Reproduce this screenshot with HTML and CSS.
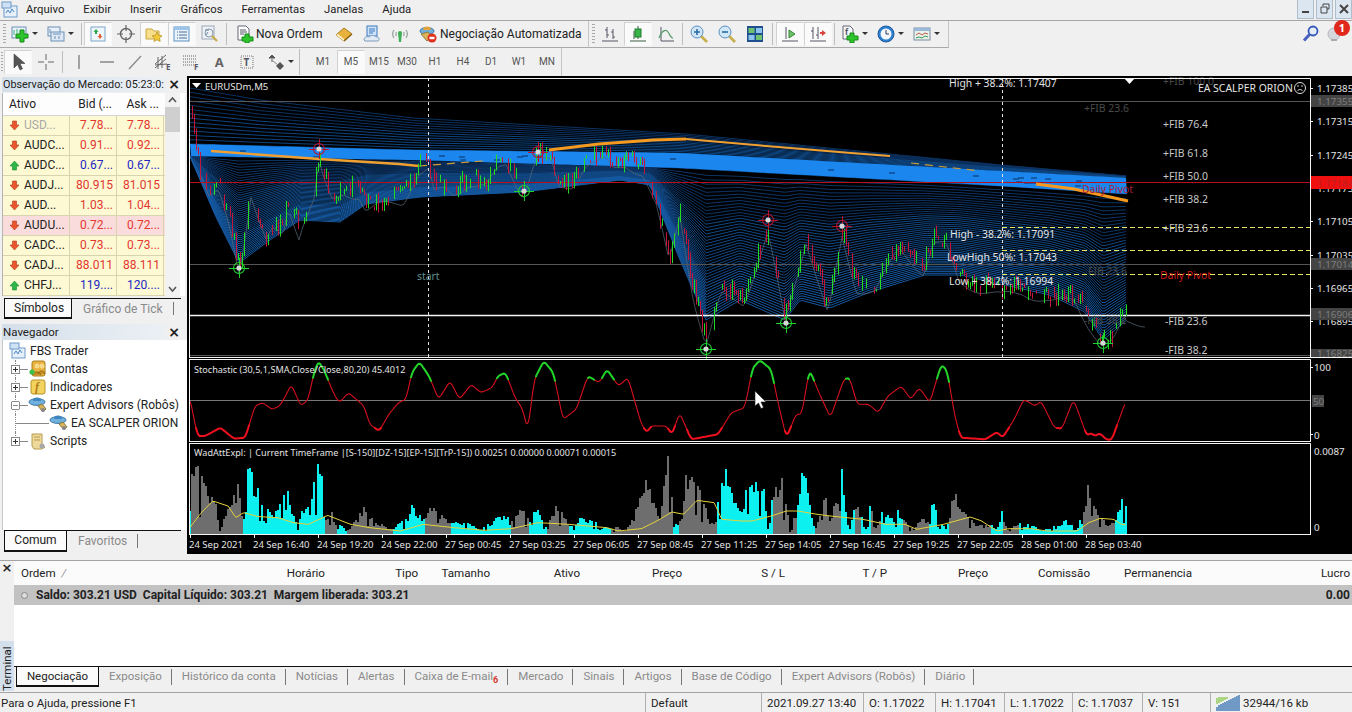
FILE: index.html
```html
<!DOCTYPE html>
<html lang="pt">
<head>
<meta charset="utf-8">
<title>MetaTrader 4</title>
<link rel="stylesheet" href="styles.css">
</head>
<body>
<svg class="defs" width="0" height="0">
  <symbol id="dn" viewBox="0 0 11 11"><path d="M3.500 1h4v4H10L5.500 10 1 5h2.500z" fill="#e8552e" stroke="#b5391a" stroke-width=".6"/></symbol>
  <symbol id="up" viewBox="0 0 11 11"><path d="M3.500 10h4V6H10L5.500 1 1 6h2.500z" fill="#2fb84a" stroke="#178a2c" stroke-width=".6"/></symbol>
  <symbol id="ea" viewBox="0 0 20 18"><ellipse cx="9" cy="6" rx="8" ry="3.400" fill="#6fb0dc" stroke="#3b78a8"/><path d="M5 5a4 3.400 0 0 1 8 0z" fill="#3f86c0"/><path d="M10 10l4-2 4 5-3 3z" fill="#d9b45a" stroke="#8c7a3e"/><circle cx="15" cy="14" r="2" fill="#888"/></symbol>
  <symbol id="pl" viewBox="0 0 9 9"><rect x=".5" y=".5" width="8" height="8" fill="#fff" stroke="#8a8a8a"/><path d="M2 4.500h5M4.500 2v5" stroke="#333"/></symbol>
</svg>
<div class="app">
  <header class="menubar">
    <svg class="appicon" viewBox="0 0 18 18"><rect x="3" y="5" width="13" height="11" fill="#e6f0fa" stroke="#6d9ac8"/><rect x="1" y="1" width="9" height="6" fill="#cfe2f5" stroke="#6d9ac8"/><path d="M5 12l2-3 2 3 2-4 2 3" fill="none" stroke="#4a86c0"/></svg>
    <nav class="menu"><span>Arquivo</span><span>Exibir</span><span>Inserir</span><span>Gráficos</span><span>Ferramentas</span><span>Janelas</span><span>Ajuda</span></nav>
    <div class="winbtns">
      <span class="winbtn"><svg viewBox="0 0 12 12"><path d="M2 9h7" stroke="#444" stroke-width="2"/></svg></span>
      <span class="winbtn"><svg viewBox="0 0 12 12"><path d="M4 3V1h6v5H8M2 4h6v6H2z" fill="none" stroke="#444"/></svg></span>
      <span class="winbtn"><svg viewBox="0 0 12 12"><path d="M2 2l8 8M10 2l-8 8" stroke="#444" stroke-width="2"/></svg></span>
    </div>
  </header>

  <div class="tbrow row1">
    <div class="tb tb-a">
      <i class="grip"></i>
      <span class="drop"><svg class="ic" viewBox="0 0 18 18"><rect x="1" y="2" width="14" height="11" fill="#e8f0fa" stroke="#6d8fb5"/><path d="M3 5v5M6 4v4" stroke="#3b7" fill="none"/><path d="M9 5h4v4h4v4h-4v4H9v-4H5V9h4z" fill="#2cc52c" stroke="#178a17"/></svg><i class="caret"></i></span>
      <span class="drop"><svg class="ic" viewBox="0 0 18 18"><rect x="1" y="2" width="12" height="9" fill="#e8f0fa" stroke="#6d8fb5"/><rect x="4" y="7" width="13" height="9" fill="#dfe9f5" stroke="#6d8fb5"/><path d="M3 4v4M6 9h8M8 11v3M12 11v3" stroke="#6d8fb5"/></svg><i class="caret"></i></span>
      <i class="sep"></i>
      <span class="btn on"><svg class="ic" viewBox="0 0 18 18"><rect x="2" y="2" width="14" height="14" fill="#eef5fb" stroke="#7fa6c8"/><path d="M7 4l2.500 3H8v2H6V7H4.500z" fill="#2fa84a"/><path d="M11 14l-2.500-3H10V9h2v2h1.500z" fill="#e0603a"/></svg></span>
      <span class="btn"><svg class="ic" viewBox="0 0 18 18"><circle cx="9" cy="9" r="5.500" fill="none" stroke="#666" stroke-width="1.400"/><path d="M9 0v6M9 12v6M0 9h6M12 9h6" stroke="#666" stroke-width="1.200"/></svg></span>
      <span class="btn on"><svg class="ic" viewBox="0 0 18 18"><path d="M1 4h6l2 2h5v8H1z" fill="#f6de8a" stroke="#c9a640"/><path d="M12 7l1.700 3.300 3.300.5-2.500 2.300.7 3.400-3.200-1.700-3 1.700.6-3.400L7 10.800l3.400-.5z" fill="#f3c93a" stroke="#b58e1c" stroke-width=".7"/></svg></span>
      <span class="btn on"><svg class="ic" viewBox="0 0 18 18"><rect x="1" y="2" width="15" height="14" fill="#eaf3fb" stroke="#5a8fc0"/><rect x="1" y="2" width="15" height="3" fill="#9cc4e8"/><path d="M4 7h1M4 10h1M4 13h1M6 7h8M6 10h8M6 13h8" stroke="#4a6f94"/></svg></span>
      <span class="btn"><svg class="ic" viewBox="0 0 18 18"><rect x="1" y="1" width="12" height="13" fill="#eef2f6" stroke="#99a8b8"/><circle cx="8" cy="8" r="4" fill="none" stroke="#8898a8"/><path d="M4 5h4M5 10l2-3" stroke="#6a8aa0"/><path d="M11 11l5 5" stroke="#c7ae4a" stroke-width="2.400"/></svg></span>
      <i class="sep"></i>
      <span class="btn btn-text w-order"><svg class="ic" viewBox="0 0 18 18"><path d="M2 1h8l3 3v11H2z" fill="#fff" stroke="#667"/><path d="M4 5h6M4 7h7M4 9h4" stroke="#556"/><path d="M9 9h4v3h4v4h-4v2H9v-2H6v-4h3z" fill="#2cc52c" stroke="#178a17"/></svg>Nova Ordem</span>
      <span class="btn"><svg class="ic" viewBox="0 0 18 18"><path d="M1 10l8-7 8 6-8 7z" fill="#e8b23c" stroke="#a97c1c"/><path d="M1 10l8 6v-2l-6-5z" fill="#fff3c8"/><path d="M9 16l8-7" stroke="#8a6416" stroke-width="1.400"/></svg></span>
      <span class="btn"><svg class="ic" viewBox="0 0 18 18"><rect x="4" y="1" width="10" height="10" fill="#cfe3f7" stroke="#3c78c0"/><path d="M6 4h6M6 6h6M6 8h4" stroke="#3c78c0"/><path d="M1 15c0-3 3-4 5-3 1-2 6-2 7 0 3-1 4 3 2 4H2z" fill="#dfeaf5" stroke="#7d9cbd"/></svg></span>
      <span class="btn"><svg class="ic" viewBox="0 0 18 18"><path d="M3 13a7 7 0 0 1 0-8M15 5a7 7 0 0 1 0 8M5.500 11a4 4 0 0 1 0-4M12.500 7a4 4 0 0 1 0 4" fill="none" stroke="#9aa8a0" stroke-width="1.300"/><path d="M7 8h4l-1 9H8z" fill="#3cae55"/><circle cx="9" cy="8" r="2" fill="#3cae55"/></svg></span>
      <span class="btn btn-text w-auto"><svg class="ic" viewBox="0 0 18 18"><ellipse cx="8" cy="6" rx="7" ry="3.500" fill="#6fb0dc" stroke="#3b78a8"/><path d="M4 5a4 3.500 0 0 1 8 0z" fill="#e2a33a"/><path d="M2 9l7-2 4 5-5 4z" fill="#d9b45a" stroke="#8c7a3e"/><circle cx="13" cy="13" r="4.500" fill="#e0301e"/><rect x="10.500" y="11.800" width="5" height="2.400" fill="#fff"/></svg>Negociação Automatizada</span>
    </div>
    <div class="tb tb-b">
      <i class="grip"></i>
      <span class="btn"><svg class="ic" viewBox="0 0 18 18"><path d="M6 2v11M4 5h2M6 10h2M12 4v10M10 7h2M12 12h2M1 16h16" stroke="#556" fill="none"/></svg></span>
      <span class="btn on"><svg class="ic" viewBox="0 0 18 18"><path d="M9 1v13M1 16h16M5 6v8" stroke="#3a5a40" fill="none"/><rect x="6" y="4" width="6" height="8" fill="#39b54a" stroke="#1d7a2c"/></svg></span>
      <span class="btn"><svg class="ic" viewBox="0 0 18 18"><path d="M4 2v14h13" fill="none" stroke="#556"/><path d="M2 13c3-8 7-9 9-6s3 6 5 6" fill="none" stroke="#5a9a6a" stroke-width="1.200"/></svg></span>
      <i class="sep"></i>
      <span class="btn"><svg class="ic" viewBox="0 0 18 18"><path d="M11 11l6 6" stroke="#c7ae4a" stroke-width="2.600"/><circle cx="7" cy="7" r="6" fill="#cfe6f7" stroke="#5c8fc0"/><path d="M4 7h6M7 4v6" stroke="#2b6ca8" stroke-width="1.600"/></svg></span>
      <span class="btn"><svg class="ic" viewBox="0 0 18 18"><path d="M11 11l6 6" stroke="#c7ae4a" stroke-width="2.600"/><circle cx="7" cy="7" r="6" fill="#cfe6f7" stroke="#5c8fc0"/><path d="M4 7h6" stroke="#2b6ca8" stroke-width="1.600"/></svg></span>
      <span class="btn"><svg class="ic" viewBox="0 0 18 18"><rect x="1" y="1" width="16" height="16" fill="#1f4f8c"/><rect x="2.500" y="3" width="6" height="5" fill="#6fc36f"/><rect x="10" y="3" width="6" height="5" fill="#8cc4ec"/><rect x="2.500" y="10" width="6" height="5" fill="#8cc4ec"/><rect x="10" y="10" width="6" height="5" fill="#6fc36f"/></svg></span>
      <i class="sep sep-w"></i>
      <span class="btn on"><svg class="ic" viewBox="0 0 18 18"><path d="M5 2v12M1 16h16" stroke="#556" fill="none"/><path d="M8 5l6 4-6 4z" fill="#6cc06c" stroke="#3a8a3a"/></svg></span>
      <span class="btn on"><svg class="ic" viewBox="0 0 18 18"><path d="M4 2v12M9 2v12M1 16h16M2 6h2M9 10h-2" stroke="#556" fill="none"/><path d="M17 8l-4-3v2h-2v2h2v2z" fill="#d8453a"/></svg></span>
      <i class="sep"></i>
      <span class="drop"><svg class="ic" viewBox="0 0 18 18"><path d="M2 1h7l3 3v10H2z" fill="#f4f6f8" stroke="#667"/><text class="ic-f" x="4" y="10">f</text><path d="M9 8h4v3h4v4h-4v3H9v-3H6v-4h3z" fill="#2cc52c" stroke="#178a17"/></svg><i class="caret"></i></span>
      <span class="drop"><svg class="ic" viewBox="0 0 18 18"><circle cx="9" cy="9" r="8" fill="#2f7fd0" stroke="#1c5a9c"/><circle cx="9" cy="9" r="5.500" fill="#f4f8fc"/><path d="M9 5v4h3" fill="none" stroke="#335"/></svg><i class="caret"></i></span>
      <span class="drop"><svg class="ic" viewBox="0 0 18 18"><rect x="1" y="3" width="16" height="12" fill="#e9f2ea" stroke="#7a8aa0"/><rect x="1" y="3" width="16" height="3" fill="#9ab8d8"/><path d="M3 10l3-2 3 2 3-2 3 1" fill="none" stroke="#c05a4a"/><path d="M3 13l3-1 3 1 3-2 3 1" fill="none" stroke="#3c9a5a"/></svg><i class="caret"></i></span>
    </div>
    <div class="tb-right">
      <svg class="ic" viewBox="0 0 18 18"><circle cx="11" cy="6" r="4.500" fill="#e4eefa" stroke="#3557b8" stroke-width="1.800"/><path d="M7.500 9.500L2 15.500" stroke="#4a5fc0" stroke-width="3"/></svg>
      <span class="bell"><svg class="ic" viewBox="0 0 18 18"><circle cx="8" cy="9" r="6" fill="#d5d8dc" stroke="#b4b8bc"/><path d="M5 15h6" stroke="#aaa" stroke-width="2"/></svg><b class="badge">1</b></span>
    </div>
  </div>

  <div class="tbrow row2">
    <div class="tb tb-c">
      <i class="grip"></i>
      <span class="btn on"><svg class="ic" viewBox="0 0 18 18"><path d="M5 1v14l3.500-3.500L11 17l2.500-1.200L11 10.500h5z" fill="#555" stroke="#333" stroke-width=".5"/></svg></span>
      <span class="btn"><svg class="ic" viewBox="0 0 18 18"><path d="M9 1v6M9 11v6M1 9h6M11 9h6" stroke="#666"/></svg></span>
      <i class="sep"></i>
      <span class="btn"><svg class="ic" viewBox="0 0 18 18"><path d="M9 2v14" stroke="#777" stroke-width="1.300"/></svg></span>
      <span class="btn"><svg class="ic" viewBox="0 0 18 18"><path d="M2 9h14" stroke="#777" stroke-width="1.300"/></svg></span>
      <span class="btn"><svg class="ic" viewBox="0 0 18 18"><path d="M3 16L15 3" stroke="#888" stroke-width="1.300"/></svg></span>
      <span class="btn"><svg class="ic" viewBox="0 0 18 18"><path d="M1 11L12 2M1 15L12 6M1 12l12-1M4 4v12M8 3v12" stroke="#666" fill="none"/><text class="ic-l" x="12" y="17">E</text></svg></span>
      <span class="btn"><svg class="ic" viewBox="0 0 18 18"><path d="M1 3h13M1 6h13M1 9h13M1 12h13" stroke="#666" stroke-dasharray="1 1"/><text class="ic-l" x="12" y="17">F</text></svg></span>
      <span class="btn btn-glyph">A</span>
      <span class="btn"><svg class="ic" viewBox="0 0 18 18"><rect x="3" y="3" width="12" height="12" fill="none" stroke="#777" stroke-dasharray="1 1"/><text class="ic-t" x="5.500" y="13">T</text></svg></span>
      <span class="drop drop-s"><svg class="ic" viewBox="0 0 18 18"><path d="M5 2l3 3H2zM5 6v3" fill="#555" stroke="#555"/><path d="M13 9l4 4-4 4-4-4z" fill="#555"/><path d="M6 8l5 4" stroke="#888"/></svg><i class="caret"></i></span>
      <i class="sep sep-t"></i>
      <span class="tf">M1</span><span class="tf on">M5</span><span class="tf">M15</span><span class="tf">M30</span><span class="tf">H1</span><span class="tf">H4</span><span class="tf">D1</span><span class="tf">W1</span><span class="tf">MN</span>
    </div>
  </div>

  <main class="work">
    <aside class="side">
      <section class="watch">
        <div class="ptitle"><span>Observação do Mercado: 05:23:0:</span><b class="x">×</b></div>
        <div class="mw">
          <div class="mw-table">
            <div class="mw-head"><span>Ativo</span><span class="r">Bid (...</span><span class="r">Ask ...</span></div>
            <div class="mw-row dim"><span><svg class="ar"><use href="#dn"/></svg>USD...</span><span class="num red">7.78...</span><span class="num red">7.78...</span></div>
            <div class="mw-row"><span><svg class="ar"><use href="#dn"/></svg>AUDC...</span><span class="num red">0.91...</span><span class="num red">0.92...</span></div>
            <div class="mw-row"><span><svg class="ar"><use href="#up"/></svg>AUDC...</span><span class="num blue">0.67...</span><span class="num blue">0.67...</span></div>
            <div class="mw-row"><span><svg class="ar"><use href="#dn"/></svg>AUDJ...</span><span class="num red">80.915</span><span class="num red">81.015</span></div>
            <div class="mw-row"><span><svg class="ar"><use href="#dn"/></svg>AUD...</span><span class="num red">1.03...</span><span class="num red">1.04...</span></div>
            <div class="mw-row sel"><span><svg class="ar"><use href="#dn"/></svg>AUDU...</span><span class="num red">0.72...</span><span class="num red">0.72...</span></div>
            <div class="mw-row"><span><svg class="ar"><use href="#dn"/></svg>CADC...</span><span class="num red">0.73...</span><span class="num red">0.73...</span></div>
            <div class="mw-row"><span><svg class="ar"><use href="#dn"/></svg>CADJ...</span><span class="num red">88.011</span><span class="num red">88.111</span></div>
            <div class="mw-row"><span><svg class="ar"><use href="#up"/></svg>CHFJ...</span><span class="num blue">119....</span><span class="num blue">120....</span></div>
          </div>
          <div class="scroll">
            <svg class="sarrow" viewBox="0 0 15 14"><path d="M4 9l3.500-4L11 9" fill="none" stroke="#555" stroke-width="1.500"/></svg>
            <div class="thumb"></div>
            <svg class="sarrow end" viewBox="0 0 15 14"><path d="M4 5l3.500 4L11 5" fill="none" stroke="#555" stroke-width="1.500"/></svg>
          </div>
        </div>
        <div class="tabs side-tabs"><span class="tab on">Símbolos</span><span class="tab">Gráfico de Tick</span></div>
      </section>
      <section class="navigator">
        <div class="ptitle"><span>Navegador</span><b class="x">×</b></div>
        <div class="tree">
          <div class="node root"><svg class="ti" viewBox="0 0 18 18"><rect x="3" y="6" width="13" height="10" fill="#e6f0fa" stroke="#6d9ac8"/><rect x="1" y="1" width="9" height="6" fill="#cfe2f5" stroke="#6d9ac8"/><path d="M5 12l2-3 2 3 2-4 2 3" fill="none" stroke="#4a86c0"/></svg>FBS Trader</div>
          <div class="node"><i class="twig"><svg class="exp"><use href="#pl"/></svg></i><svg class="ti" viewBox="0 0 18 18"><rect x="3" y="1" width="13" height="15" rx="2" fill="#e8b23c" stroke="#a97c1c"/><circle cx="8" cy="6" r="2.500" fill="#f6d98a"/><circle cx="13" cy="6" r="2.500" fill="#f6d98a"/><path d="M4 15c0-4 7-4 8 0M9 14c1-4 6-4 7 0" fill="#c98e22" stroke="#8a6416"/><circle cx="3" cy="12" r="2.600" fill="#3cc04a"/></svg>Contas</div>
          <div class="node"><i class="twig"><svg class="exp"><use href="#pl"/></svg></i><svg class="ti" viewBox="0 0 18 18"><rect x="2" y="2" width="14" height="14" rx="2" fill="#f3d35e" stroke="#b59428"/><text class="ic-f2" x="6" y="13">f</text></svg>Indicadores</div>
          <div class="node"><i class="twig"><svg class="exp"><path d="M1 .5h7l.5.5v7l-.5.5H1L.5 8V1zM2 4.500h5" fill="#fff" stroke="#8a8a8a"/></svg></i><svg class="ti"><use href="#ea"/></svg>Expert Advisors (Robôs)</div>
          <div class="node leaf"><i class="twig twig-l"></i><svg class="ti"><use href="#ea"/></svg>EA SCALPER ORION</div>
          <div class="node last"><i class="twig"><svg class="exp"><use href="#pl"/></svg></i><svg class="ti" viewBox="0 0 18 18"><path d="M3 2h10v10l3 3-3 2H5l-2-3z" fill="#efd99a" stroke="#b59a50"/><path d="M5 5h6M5 8h6" stroke="#b59a50"/><circle cx="13" cy="14" r="2.500" fill="#a8a8a8"/></svg>Scripts</div>
        </div>
        <div class="tabs side-tabs nav-tabs"><span class="tab on">Comum</span><span class="tab">Favoritos</span></div>
      </section>
    </aside>

    <section class="chart">
      <svg id="main" class="pane p-main" viewBox="187 76 1165 283" width="1165" height="283">
        <g id="fan"></g>
        <path class="hl-dim" d="M190 101.500H1310M190 264.500H1310M190 355.500H1310"/>
        <path class="hl-red" d="M190 182.500H1310"/>
        <g id="orange"></g>
        <path class="hl-white" d="M190 315.500H1310"/>
        <g id="candles"></g>
        <path class="hl-yellow" d="M1002 227.500H1310M1002 250.500H1310M1002 274.500H1310"/>
        <path class="vdash" d="M428.500 78V357M1002.500 78V357"/>
        <g id="marks"></g>
        <text class="t ts" x="205" y="90">EURUSDm,M5</text>
        <path d="M192 83h9l-4.500 5z" fill="#fff"/>
        <path d="M1124 78h11l-5.500 6z" fill="#fff"/>
        <text class="t" x="949" y="87">High + 38.2%: 1.17407</text>
        <text class="t dimtxt" x="1084" y="112">+FIB 23.6</text>
        <text class="t dimtxt" x="1163" y="85">+FIB 100.0</text>
        <text class="t fib" x="1163" y="128">+FIB 76.4</text>
        <text class="t fib" x="1163" y="157">+FIB 61.8</text>
        <text class="t fib" x="1163" y="180">+FIB 50.0</text>
        <text class="t fib" x="1163" y="203">+FIB 38.2</text>
        <text class="t fib" x="1163" y="232">+FIB 23.6</text>
        <text class="t" x="950" y="238">High - 38.2%: 1.17091</text>
        <text class="t" x="947" y="261">LowHigh 50%: 1.17043</text>
        <text class="t" x="949" y="285">Low + 38.2%: 1.16994</text>
        <text class="t pivot" x="1160" y="279">Daily Pivot</text>
        <text class="t pivot dp2" x="1082" y="193">Daily Pivot</text>
        <text class="t dimtxt" x="1088" y="275">FIB 23.6</text>
        <text class="t dimtxt" x="1084" y="324">-FIB 38.2</text>
        <text class="t fib" x="1165" y="325">-FIB 23.6</text>
        <text class="t fib" x="1165" y="354">-FIB 38.2</text>
        <text class="t start" x="417" y="280">start</text>
        <text class="t" x="1198" y="92">EA SCALPER ORION</text>
        <g fill="none" stroke="#ddd"><circle cx="1300" cy="88" r="5.500"/><path d="M1297.500 91c1-2 4-2 5 0"/></g>
        <circle cx="1298" cy="86" r=".8" fill="#ddd"/><circle cx="1302" cy="86" r=".8" fill="#ddd"/>
        <path class="frame" d="M190 78.500H1310.500V358M189.500 78V358M190 357.500H1352"/>
        <path class="frame" d="M1310 88.500h3M1310 121.500h3M1310 155.500h3M1310 188.500h3M1310 221.500h3M1310 255.500h3M1310 288.500h3M1310 321.500h3"/>
        <text class="t tp" x="1317" y="92">1.17385</text>
        <text class="t tp" x="1317" y="125">1.17315</text>
        <text class="t tp" x="1317" y="159">1.17245</text>
        <text class="t tp" x="1317" y="192">1.17175</text>
        <text class="t tp" x="1317" y="225">1.17105</text>
        <text class="t tp" x="1317" y="259">1.17035</text>
        <text class="t tp" x="1317" y="292">1.16965</text>
        <text class="t tp" x="1317" y="325">1.16895</text>
        <rect x="1311" y="95" width="41" height="12" fill="#444"/><text class="t tp tagt" x="1317" y="105">1.17355</text>
        <rect x="1311" y="258" width="41" height="12" fill="#444"/><text class="t tp tagt" x="1317" y="268">1.17014</text>
        <rect x="1311" y="308" width="41" height="12" fill="#444"/><text class="t tp tagt" x="1317" y="318">1.16906</text>
        <rect x="1311" y="349" width="41" height="8" fill="#444"/><text class="t tp tagt" x="1317" y="357">1.16825</text>
        <rect x="1311" y="176" width="41" height="13" fill="#f01010"/><text class="t tp redt" x="1317" y="187">1.17184</text>
      </svg>
      <svg id="stoch" class="pane p-stoch" viewBox="187 359 1165 84" width="1165" height="84">
        <path class="hl-grey" d="M190 400.500H1310"/>
        <g id="stochline"></g>
        <text class="t tn" x="194" y="373">Stochastic (30,5,1,SMA,Close/Close,80,20) 45.4012</text>
        <path class="frame" d="M189.500 359V442M190 359.500H1310.500V442M190 441.500H1310.500"/>
        <path class="frame" d="M1310 367.500h3M1310 434.500h3"/>
        <text class="t tp" x="1314" y="371">100</text>
        <rect x="1312" y="395" width="12" height="12" fill="#444"/><text class="t tp tagt" x="1313" y="405">50</text>
        <text class="t tp" x="1314" y="439">0</text>
        <path d="M755 391v15l3.500-3 2.500 5.500 2.500-1-2.500-5.500h5z" fill="#fff" stroke="#222" stroke-width=".6"/>
      </svg>
      <svg id="wad" class="pane p-wad" viewBox="187 443 1165 91" width="1165" height="91">
        <g id="wadbars"></g>
        <g id="wadline"></g>
        <text class="t tn" x="194" y="456">WadAttExpl: | Current TimeFrame |[S-150][DZ-15][EP-15][TrP-15]) 0.00251 0.00000 0.00071 0.00015</text>
        <path class="frame" d="M189.500 443V534M190 443.500H1310.500V534"/>
        <text class="t tp" x="1314" y="455">0.0087</text>
        <text class="t tp" x="1314" y="531">0</text>
      </svg>
      <svg class="pane p-axis" viewBox="187 534 1165 20" width="1165" height="20">
        <path class="frame" d="M189 534.500H1311M190.500 534v4M254.500 534v4M318.500 534v4M382.500 534v4M446.500 534v4M510.500 534v4M574.500 534v4M638.500 534v4M702.500 534v4M766.500 534v4M830.500 534v4M894.500 534v4M958.500 534v4M1022.500 534v4M1086.500 534v4"/>
        <text class="t tx" x="189" y="548">24 Sep 2021</text>
        <text class="t tx" x="253" y="548">24 Sep 16:40</text>
        <text class="t tx" x="317" y="548">24 Sep 19:20</text>
        <text class="t tx" x="381" y="548">24 Sep 22:00</text>
        <text class="t tx" x="445" y="548">27 Sep 00:45</text>
        <text class="t tx" x="509" y="548">27 Sep 03:25</text>
        <text class="t tx" x="573" y="548">27 Sep 06:05</text>
        <text class="t tx" x="637" y="548">27 Sep 08:45</text>
        <text class="t tx" x="701" y="548">27 Sep 11:25</text>
        <text class="t tx" x="765" y="548">27 Sep 14:05</text>
        <text class="t tx" x="829" y="548">27 Sep 16:45</text>
        <text class="t tx" x="893" y="548">27 Sep 19:25</text>
        <text class="t tx" x="957" y="548">27 Sep 22:05</text>
        <text class="t tx" x="1021" y="548">28 Sep 01:00</text>
        <text class="t tx" x="1085" y="548">28 Sep 03:40</text>
      </svg>
    </section>
  </main>

  <section class="terminal">
    <div class="tstrip"><b class="x">×</b><span class="tlabel">Terminal</span></div>
    <div class="tbody">
      <div class="thead">
        <span class="l">Ordem &nbsp;<em>/</em></span><span>Horário</span><span>Tipo</span><span>Tamanho</span><span>Ativo</span><span>Preço</span><span>S / L</span><span>T / P</span><span>Preço</span><span>Comissão</span><span>Permanencia</span><span>Lucro</span>
      </div>
      <div class="balance"><span><i class="dot"></i>Saldo: 303.21 USD&nbsp; Capital Líquido: 303.21&nbsp; Margem liberada: 303.21</span><span>0.00</span></div>
      <div class="tspace"></div>
      <div class="tabs term-tabs">
        <span class="tab on">Negociação</span><span class="tab">Exposição</span><span class="tab">Histórico da conta</span><span class="tab">Notícias</span><span class="tab">Alertas</span><span class="tab mail">Caixa de E-mail<sub>6</sub></span><span class="tab">Mercado</span><span class="tab">Sinais</span><span class="tab">Artigos</span><span class="tab">Base de Código</span><span class="tab">Expert Advisors (Robôs)</span><span class="tab">Diário</span>
      </div>
    </div>
  </section>

  <footer class="status">
    <span class="s1">Para o Ajuda, pressione F1</span>
    <span class="s2">Default</span>
    <span class="s3">2021.09.27 13:40</span>
    <span class="s4">O: 1.17022</span>
    <span class="s5">H: 1.17041</span>
    <span class="s6">L: 1.17022</span>
    <span class="s7">C: 1.17037</span>
    <span class="s8">V: 151</span>
    <span class="s9"><svg class="net" viewBox="0 0 24 16"><path d="M1 16V12M3 16V10M5 16V9M7 16V8M9 16V7M11 16V6M13 16V5M15 16V4M17 16V3M19 16V2M21 16V1M23 16V0" stroke="#1c5fa8" stroke-width="1.200"/><path d="M1 9V3M3 8V2M5 7V2M7 6V2M9 5V2M11 4V2" stroke="#7cc43c" stroke-width="1.200"/></svg>32944/16 kb</span>
  </footer>
</div>
<script src="chart.js"></script>
</body>
</html>
```
FILE: styles.css
```css
* { box-sizing: border-box; }
html, body { margin: 0; height: 100%; overflow: hidden; }
body { font: 12px Roboto, "Noto Sans", sans-serif; color: #222; background: #f0f0f0; }
.defs { position: absolute; }
.app { width: 1352px; height: 712px; display: flex; flex-direction: column; }

.menubar { height: 21px; display: flex; align-items: center; border-bottom: 1px solid #a6a6a6; padding-left: 1px; }
.appicon { width: 18px; height: 18px; }
.menu { display: flex; gap: 19px; margin-left: 7px; font-size: 11.3px; }
.winbtns { margin-left: auto; display: flex; gap: 2px; align-self: flex-start; }
.winbtn { width: 17px; height: 19px; background: #dbe6f1; border: 1px solid #aebdcc; border-top: 0; display: flex; align-items: center; justify-content: center; }
.winbtn svg { width: 12px; height: 12px; }

.tbrow { display: flex; }
.row1 { height: 27px; }
.row2 { height: 28px; }
.tb { display: flex; align-items: center; border-bottom: 1px solid #a9a9a9; border-right: 1px solid #c4c4c4; }
.tb-a { width: 589px; padding-left: 3px; }
.tb-b { width: 360px; padding-left: 3px; }
.tb-c { width: 562px; border-bottom: 0; }
.tb-c .grip { margin-left: 1px; }
.tb-right { margin-left: auto; display: flex; align-items: center; gap: 6px; padding-right: 2px; }
.grip { width: 3px; height: 20px; margin-right: 1px; background: repeating-linear-gradient(#a8a8a8 0 1px, transparent 1px 3px); }
.sep { width: 1px; height: 22px; margin: 0 2px; background: #bdbdbd; }
.sep-w { margin: 0 3px; }
.sep-t { margin: 0 9px 0 3px; height: 26px; }
.ic { width: 18px; height: 18px; flex: none; display: block; }
.ic-f, .ic-l, .ic-t { font: 700 8px "Noto Sans", sans-serif; fill: #556; }
.ic-t { font-size: 10px; }
.ic-f2 { font: italic 700 12px "Liberation Serif", serif; fill: #b07a1a; }
.btn, .tf { width: 28px; height: 24px; flex: none; display: flex; align-items: center; justify-content: center; border: 1px solid transparent; }
.on { background: #fafafa; border-color: #d2d2d2 #f8f8f8 #f8f8f8 #d2d2d2; }
.btn-text { justify-content: flex-start; gap: 2px; font-size: 12px; white-space: nowrap; }
.w-order { width: 101px; padding-left: 6px; }
.w-auto { width: 172px; padding-left: 4px; gap: 3px; }
.drop { width: 36px; height: 24px; flex: none; display: flex; align-items: center; gap: 3px; padding-left: 4px; }
.drop-s { width: 35px; padding-left: 6px; }
.caret { width: 0; height: 0; border: 3px solid transparent; border-top: 3px solid #333; border-bottom: 0; }
.btn-glyph { font: 700 13px "Noto Sans", sans-serif; color: #666; }
.tf { font-size: 10px; color: #555; }
.bell { position: relative; display: block; width: 24px; }
.badge { position: absolute; right: 0; top: -5px; width: 16px; height: 16px; border-radius: 50%; background: #e0281c; color: #fff; font: 700 11px/16px "Noto Sans", sans-serif; text-align: center; }

.work { height: 478px; display: flex; border-top: 0; }
.side { width: 187px; flex: none; display: flex; flex-direction: column; padding-top: 1px; }
.ptitle { height: 15px; flex: none; margin: 0 2px 0 2px; display: flex; justify-content: space-between; align-items: center; background: linear-gradient(90deg, #d4dfea, #eef2f6); font-size: 10.8px; color: #222; white-space: nowrap; overflow: hidden; }
.ptitle span { padding-left: 1px; }
.navigator .ptitle { font-size: 11.5px; }
.x { font: 700 14px/14px "DejaVu Sans", sans-serif; padding: 0 5px 0 3px; color: #222; background: #f0f0f0; flex: none; }
.watch { height: 241px; flex: none; }
.mw { display: flex; margin: 1px 2px 0; height: 203px; background: #fff; border-left: 1px solid #b4b4b4; }
.mw-table { width: 162px; flex: none; }
.mw-head, .mw-row { display: grid; grid-template-columns: 67px 47px 47px; }
.mw-head { height: 23px; align-items: center; border-bottom: 1px solid #d4d4d4; background: #fdfdfd; }
.mw-head span { padding: 0 5px; }
.mw-head span:first-child { padding-left: 6px; }
.r { text-align: right; }
.mw-row { height: 20px; background: #fdf9d3; border-bottom: 1px solid #d8d4b0; align-items: center; line-height: 19px; }
.mw-row > span { display: flex; align-items: center; height: 19px; border-right: 1px solid #d8d4b0; white-space: nowrap; overflow: hidden; }
.mw-row.sel { background: #fbdcdc; }
.mw-row.dim > span:first-child { color: #a8a8a8; }
.ar { width: 11px; height: 11px; margin: 0 4px 0 6px; flex: none; }
.num { justify-content: flex-end; padding-right: 3px; }
.red { color: #e2362e; }
.blue { color: #2426c4; }
.scroll { width: 15px; flex: none; display: flex; flex-direction: column; background: #f2f2f2; }
.sarrow { width: 15px; height: 14px; flex: none; }
.sarrow.end { margin-top: auto; }
.thumb { height: 25px; background: #cfcfcf; }
.tabs { display: flex; border-top: 1px solid #111; }
.tab { display: block; white-space: nowrap; color: #8a8a8a; border-right: 1px solid #777; }
.tab.on { color: #222; background: #fbfbfb; border: 1px solid #111; border-top: 0; border-bottom-width: 2px; }
.side-tabs { margin: 2px 6px 0 4px; height: 21px; align-items: stretch; }
.side-tabs .tab { margin: 3px 0 4px; padding: 0 10px 0 1px; line-height: 14px; }
.side-tabs .tab.on { margin: 0; padding: 0 9px; width: 68px; line-height: 18px; text-align: center; }
.side-tabs .tab:not(.on) { margin-left: 10px; }
.nav-tabs .tab.on { width: 63px; }
.navigator { margin-top: 6px; flex: 1; display: flex; flex-direction: column; }
.navigator .ptitle { height: 16px; margin-bottom: 2px; }
.tree { flex: 1; margin-left: 2px; border-left: 1px solid #c8c8c8; background: #fff; margin-top: -2px; padding-top: 2px; }
.nav-tabs { margin-top: 0; margin-bottom: 2px; height: 22px; flex: none; }
.node { height: 18px; display: flex; align-items: center; white-space: nowrap; }
.root { padding-left: 5px; }
.ti { width: 20px; height: 18px; margin-right: 2px; flex: none; }
.root .ti { margin-right: 2px; }
.twig { position: relative; width: 13px; height: 18px; margin-left: 12px; border-left: 1px dotted #888; background: linear-gradient(#888, #888) 0 9px / 100% 1px no-repeat; flex: none; }
.last .twig { height: 10px; margin-bottom: 8px; }
.twig-l { width: 34px; }
.exp { position: absolute; left: -5px; top: 5px; width: 9px; height: 9px; }

.chart { flex: 1; background: #000; display: flex; flex-direction: column; }
.pane { display: block; flex: none; }
.t { font: 10.4px "Noto Sans", sans-serif; fill: #e4e4e4; }
.ts { font-size: 9.6px; }
.tp { font-size: 9.8px; }
.tn { font-size: 9.1px; }
.tx { font-size: 9.5px; }
.dimtxt { fill: #4a4a4a; }
.fib { fill: #c8c8c8; }
.pivot { fill: #d01818; }
.dp2 { fill: #a81c3c; }
.start { fill: #5f8f8f; }
.tagt { fill: #7d7d7d; }
.redt { fill: #b82020; }
.hl-dim { stroke: #555; fill: none; }
.hl-grey { stroke: #777; fill: none; }
.hl-red { stroke: #b80f1f; fill: none; }
.hl-white { stroke: #f4f4f4; fill: none; stroke-width: 1.5; }
.hl-yellow { stroke: #e8e860; fill: none; stroke-dasharray: 5 3; }
.vdash { stroke: #e0e0e0; fill: none; stroke-dasharray: 3 3; }
.frame { stroke: #f4f4f4; fill: none; }

.terminal { height: 132px; margin-top: 6px; display: flex; border-top: 1px solid #a4a4a4; }
.tstrip { width: 14px; flex: none; display: flex; flex-direction: column; }
.tstrip .x { padding: 0; background: none; font-size: 13px; text-align: center; }
.tlabel { margin-top: auto; height: 50px; background: #d3dfeb; writing-mode: vertical-rl; transform: rotate(180deg); font-size: 11.5px; line-height: 14px; text-align: left; }
.tbody { flex: 1; display: flex; flex-direction: column; background: #fff; }
.thead { height: 24px; display: grid; grid-template-columns: 132px 179px 93px 72px 90px 102px 103px 102px 101px 102px 102px 158px; align-items: center; background: #fbfbfb; font-size: 11.6px; }
.thead span { text-align: right; }
.thead .l { text-align: left; padding-left: 7px; }
.thead em { color: #999; font-style: italic; }
.balance { height: 20px; display: flex; justify-content: space-between; align-items: center; padding: 0 2px 0 7px; background: #c2c2c2; font-weight: 700; font-size: 12px; }
.dot { display: inline-block; width: 7px; height: 7px; margin-right: 8px; border-radius: 50%; background: #ddd; border: 1px solid #888; }
.tspace { flex: 1; }
.term-tabs { height: 25px; flex: none; background: #f0f0f0; padding-left: 2px; align-items: flex-start; border-top: 1px solid #111; font-size: 11.5px; }
.term-tabs .tab { margin-top: 2px; padding: 0 9px 0 10px; line-height: 15px; height: 16px; }
.term-tabs .tab.on { margin-top: 0; width: 83px; height: 20px; line-height: 18px; padding: 0; text-align: center; }
.term-tabs .tab:last-child { padding-right: 8px; }
.mail { padding-right: 10px; }
.mail sub { color: #d8342a; font-size: 9px; font-weight: 700; line-height: 0; }

.status { height: 20px; margin-top: 1px; border-top: 1px solid #a4a4a4; display: grid; grid-template-columns: 645px 116px 102px 72px 69px 68px 70px 68px 142px; align-items: center; font-size: 11.5px; }
.status span { height: 19px; display: flex; align-items: center; border-left: 1px solid #b0b0b0; padding-left: 5px; padding-top: 1px; white-space: nowrap; }
.status .s1 { border-left: 0; padding-left: 1px; }
.net { width: 24px; height: 16px; margin-right: 3px; }
```
FILE: chart.js
```js
(function () {
  var NS = 'http://www.w3.org/2000/svg';
  var seed = 12345;
  function rnd() { seed = (seed * 16807) % 2147483647; return seed / 2147483647; }
  function interp(p, x) {
    if (x <= p[0][0]) return p[0][1];
    for (var i = 1; i < p.length; i++) {
      if (x <= p[i][0]) {
        var a = p[i - 1], b = p[i];
        return a[1] + (b[1] - a[1]) * (x - a[0]) / (b[0] - a[0] || 1);
      }
    }
    return p[p.length - 1][1];
  }
  function smooth(p, x, r) {
    var s = 0, n = 0;
    for (var d = -r; d <= r; d++) { s += interp(p, x + d); n++; }
    return s / n;
  }
  function add(parent, tag, attrs) {
    var el = document.createElementNS(NS, tag);
    for (var k in attrs) el.setAttribute(k, attrs[k]);
    parent.appendChild(el);
    return el;
  }
  function line(fn, x0, x1, step) {
    var s = '';
    for (var x = x0; x <= x1; x += step) s += (s ? 'L' : 'M') + x + ' ' + fn(x).toFixed(1);
    return s;
  }

  var price = [[191,96],[196,153],[199,166],[209,193],[219,186],[229,216],[239,263],[244,236],[251,189],[258,213],[266,236],[273,223],[283,229],[288,199],[299,229],[303,216],[314,193],[319,156],[324,176],[333,196],[343,186],[359,189],[366,204],[379,199],[403,196],[413,176],[419,166],[429,163],[434,186],[446,183],[453,189],[469,176],[486,179],[499,163],[506,159],[523,189],[533,159],[538,151],[551,156],[559,183],[573,179],[586,156],[606,154],[613,164],[626,159],[643,166],[656,199],[669,256],[680,209],[693,289],[706,339],[721,289],[744,296],[768,226],[785,316],[806,233],[828,309],[842,233],[856,283],[875,283],[899,243],[924,266],[933,236],[946,239],[959,276],[980,283],[1001,289],[1023,286],[1053,296],[1074,293],[1087,316],[1102,339],[1113,336],[1124,313],[1127,316]];
  var envTop = [[190,88],[260,100],[413,118],[686,134],[1001,165],[1127,176]];
  var bandTop = [[190,144],[413,150],[680,153],[1001,171],[1127,178]];
  var bandBot = [[190,156],[413,160],[680,168],[1001,186],[1127,194]];
  var low = [[190,156],[215,215],[239,263],[270,240],[300,220],[340,222],[366,204],[420,197],[523,192],[620,180],[650,185],[680,260],[706,320],[740,300],[785,320],[800,300],[830,308],[870,292],[925,275],[960,275],[1050,295],[1085,312],[1103,340],[1127,320]];

  /* fan of moving averages */
  var fan = document.getElementById('fan');
  var i, t, N = 13;
  for (i = 0; i <= N; i++) {
    t = i / N;
    (function (t) {
      add(fan, 'path', { d: line(function (x) { return interp(envTop, x) + (interp(bandTop, x) - interp(envTop, x)) * t; }, 190, 1127, 4), fill: 'none', stroke: t < .4 ? '#0b3262' : '#0e4580', 'stroke-width': 1 });
    })(t);
  }
  N = 46;
  for (i = 0; i <= N; i++) {
    t = i / N;
    (function (t) {
      var col = t < .3 ? '#0d3566' : t < .7 ? '#114884' : '#1559a2';
      add(fan, 'path', { d: line(function (x) { return interp(bandBot, x) + (interp(low, x) - interp(bandBot, x)) * Math.pow(t, .85); }, 190, 1127, 3), fill: 'none', stroke: col, 'stroke-width': 1 });
    })(t);
  }
  var band = 'M190 ' + interp(bandTop, 190);
  var x;
  for (x = 190; x <= 1127; x += 8) band += 'L' + x + ' ' + interp(bandTop, x).toFixed(1);
  for (x = 1127; x >= 190; x -= 8) band += 'L' + x + ' ' + interp(bandBot, x).toFixed(1);
  add(fan, 'path', { d: band + 'Z', fill: '#1a86ee' });
  for (i = 0; i < 22; i++) {
    var bx = 230 + rnd() * 860;
    add(fan, 'path', { d: 'M' + bx.toFixed(0) + ' ' + (interp(bandTop, bx) + 5 + rnd() * 6).toFixed(0) + 'h6', stroke: '#0a2f60', 'stroke-width': 1 });
  }
  add(fan, 'path', { d: line(function (x) { return interp(price, x) + 7 + 4 * Math.sin(x / 9); }, 200, 1145, 3), fill: 'none', stroke: '#5a6a7a', 'stroke-width': .7 });

  /* orange line */
  var or = document.getElementById('orange');
  add(or, 'path', { d: 'M211 151L319 159L399 164L419 166', fill: 'none', stroke: '#f0a030', 'stroke-width': 2.4 });
  add(or, 'path', { d: 'M419 166L483 161', fill: 'none', stroke: '#d09a3a', 'stroke-width': 1.2, 'stroke-dasharray': '8 6' });
  add(or, 'path', { d: 'M549 150L599 144L653 140L686 139', fill: 'none', stroke: '#f59a1e', 'stroke-width': 3 });
  add(or, 'path', { d: 'M686 139L766 146L851 153L890 156', fill: 'none', stroke: '#f0a030', 'stroke-width': 2 });
  add(or, 'path', { d: 'M911 163L980 171', fill: 'none', stroke: '#c89a3a', 'stroke-width': 1.2, 'stroke-dasharray': '8 6' });
  add(or, 'path', { d: 'M1036 184L1074 189L1128 201', fill: 'none', stroke: '#f59a1e', 'stroke-width': 3 });

  /* candles */
  var upPath = '', dnPath = '', prev = interp(price, 192);
  for (x = 192; x <= 1126; x += 2) {
    var c = interp(price, x) + (rnd() - .5) * 18;
    var hi = Math.min(prev, c) - rnd() * 5;
    var lo = Math.max(prev, c) + rnd() * 5;
    var seg = 'M' + (x + .5) + ' ' + hi.toFixed(1) + 'V' + lo.toFixed(1);
    if (rnd() < .35) { prev = c; continue; }
    if (c < prev) upPath += seg; else dnPath += seg;
    prev = c;
  }
  var cg = document.getElementById('candles');
  add(cg, 'path', { d: dnPath, stroke: '#c4163a', fill: 'none' });
  add(cg, 'path', { d: upPath, stroke: '#22dc22', fill: 'none' });

  /* swing markers */
  var mk = document.getElementById('marks');
  function marker(cx, cy, col) {
    add(mk, 'circle', { cx: cx, cy: cy, r: 5.5, fill: 'none', stroke: col, 'stroke-width': 1.1 });
    add(mk, 'path', { d: 'M' + (cx - 10) + ' ' + (cy + .5) + 'h20M' + (cx + .5) + ' ' + (cy - 10) + 'v20', stroke: col, 'stroke-width': 1 });
    add(mk, 'circle', { cx: cx, cy: cy, r: 2.6, fill: '#d8d8d8' });
  }
  [[239,268],[524,191],[706,349],[786,323],[1103,343]].forEach(function (m) { marker(m[0], m[1], '#1fd22f'); });
  [[319,149],[538,152],[768,220],[842,226]].forEach(function (m) { marker(m[0], m[1], '#b8142e'); });

  /* stochastic */
  var s7 = [[10,125],[30,240],[50,240],[90,215],[125,248],[155,245],[180,150],[200,140],[225,160],[245,150],[260,120],[275,85],[300,150],[320,130],[330,70],[345,15],[360,40],[385,110],[400,140],[425,110],[465,150],[480,205],[505,225],[530,175],[555,140],[575,130],[590,50],[610,18],[635,60],[660,130],[690,75],[715,130],[745,85],[770,110],[800,95],[815,60],[835,50],[860,125],[880,160],[893,225],[910,70],[935,15],[960,50],[985,190],[1020,160],[1050,60],[1080,80],[1100,40],[1130,90],[1155,65],[1190,205],[1205,230],[1215,210],[1255,210],[1270,235],[1290,170],[1320,250],[1390,235],[1425,170],[1460,155],[1475,70]];
  var s8 = [[0,40],[20,12],[50,40],[70,150],[90,245],[115,175],[130,175],[150,40],[175,110],[205,185],[240,70],[255,65],[275,145],[305,145],[330,170],[355,120],[390,90],[415,130],[437,95],[465,140],[480,80],[495,25],[510,45],[530,180],[545,245],[610,250],[640,228],[655,245],[685,190],[710,130],[740,150],[755,135],[790,215],[810,218],[840,130],[855,175],[875,240],[885,230],[895,240],[910,232],[925,250],[940,252],[975,140]];
  function conv(a, x0) { return a.map(function (p) { return [x0 + p[0] / 2.613, 356 + p[1] / 3].concat(p.slice(2)); }); }
  var st = conv(s7, 186).concat(conv(s8, 752));
  var sg = document.getElementById('stochline');
  var red = '', thick = '', green = '';
  for (x = 190; x < 1125; x += 1) {
    var y1 = smooth(st, x, 2), y2 = smooth(st, x + 1, 2);
    var sgm = 'M' + x + ' ' + y1.toFixed(1) + 'L' + (x + 1) + ' ' + y2.toFixed(1);
    if (y1 < 379) green += sgm; else if (y1 > 428) thick += sgm; else red += sgm;
  }
  add(sg, 'path', { d: red, stroke: '#d8101e', fill: 'none', 'stroke-width': 1.1 });
  add(sg, 'path', { d: thick, stroke: '#ee101e', fill: 'none', 'stroke-width': 2, 'stroke-linecap': 'round' });
  add(sg, 'path', { d: green, stroke: '#22d42a', fill: 'none', 'stroke-width': 2, 'stroke-linecap': 'round' });

  /* volume histogram: g = grey, c = cyan */
  var w7 = [[10,500,'c'],[12,380,'g'],[25,330,'g'],[45,345,'g'],[55,400,'g'],[75,430,'g'],[90,520,'g'],[125,420,'g'],[140,395,'g'],[150,500,'c'],[155,430,'c'],[165,290,'c'],[175,400,'c'],[190,400,'c'],[205,420,'c'],[225,480,'c'],[240,470,'c'],[255,410,'c'],[262,365,'c'],[275,460,'c'],[290,510,'c'],[315,430,'c'],[330,410,'c'],[345,340,'c'],[352,335,'c'],[358,420,'c'],[365,480,'g'],[385,460,'g'],[395,500,'c'],[405,510,'c'],[420,525,'g'],[440,500,'g'],[465,460,'g'],[490,490,'g'],[520,510,'g'],[540,520,'c'],[580,480,'c'],[590,455,'c'],[610,475,'c'],[625,490,'g'],[640,460,'g'],[660,470,'g'],[690,500,'c'],[730,500,'c'],[770,520,'c'],[810,490,'c'],[830,470,'c'],[850,490,'g'],[880,450,'g'],[895,490,'c'],[915,460,'c'],[935,500,'c'],[945,520,'g'],[960,460,'g'],[980,460,'g'],[1000,510,'c'],[1030,490,'c'],[1055,495,'c'],[1090,510,'c'],[1110,520,'g'],[1125,510,'g'],[1150,525,'g'],[1170,480,'g'],[1200,390,'g'],[1220,420,'g'],[1240,490,'g'],[1260,280,'g'],[1275,510,'c'],[1290,500,'g'],[1310,350,'g'],[1330,360,'g'],[1370,500,'g'],[1385,500,'c'],[1395,400,'c'],[1405,340,'c'],[1425,380,'c'],[1445,470,'c'],[1470,400,'c']];
  var w8 = [[15,350,'c'],[30,400,'c'],[45,530,'c'],[55,410,'g'],[80,385,'g'],[90,450,'g'],[100,525,'g'],[115,470,'c'],[130,320,'c'],[145,370,'c'],[155,470,'c'],[165,520,'g'],[170,510,'g'],[190,410,'g'],[205,500,'g'],[220,420,'g'],[230,470,'c'],[235,340,'c'],[245,470,'c'],[255,525,'c'],[270,450,'g'],[285,470,'c'],[295,520,'c'],[310,450,'g'],[325,520,'g'],[335,480,'c'],[355,460,'c'],[370,490,'c'],[382,465,'c'],[395,500,'g'],[400,490,'g'],[415,520,'g'],[445,490,'g'],[455,490,'g'],[465,500,'c'],[470,440,'c'],[490,480,'c'],[505,520,'c'],[515,500,'g'],[527,395,'g'],[545,440,'g'],[565,490,'g'],[600,510,'g'],[625,505,'c'],[640,520,'c'],[655,465,'g'],[665,520,'g'],[700,505,'c'],[740,510,'c'],[760,525,'c'],[820,495,'c'],[850,520,'c'],[865,470,'g'],[878,395,'g'],[900,470,'g'],[930,510,'g'],[950,500,'c'],[967,430,'c'],[980,460,'c']];
  var wv = conv(w7, 186).concat(conv(w8, 752));
  var wg = document.getElementById('wadbars');
  var gp = '', cp = '';
  for (x = 190; x <= 1126; x += 2) {
    var col = 'g';
    for (i = 0; i < wv.length; i++) { if (wv[i][0] <= x) col = wv[i][2]; else break; }
    var top = interp(wv, x);
    var k = rnd() < .16 ? .25 + rnd() * .3 : .7 + rnd() * .45;
    top = 533 - (533 - top) * k;
    if (top < 446) top = 446;
    var sb = 'M' + x + ' ' + top.toFixed(0) + 'V534';
    if (col === 'c') cp += sb; else gp += sb;
  }
  add(wg, 'path', { d: gp, stroke: '#6e6e6e', 'stroke-width': 2, fill: 'none' });
  add(wg, 'path', { d: cp, stroke: '#0cf0f0', 'stroke-width': 2, fill: 'none' });

  var y7 = [[10,515],[40,470],[70,435],[110,450],[130,485],[150,470],[190,482],[240,485],[280,500],[320,505],[370,478],[430,505],[480,515],[560,525],[620,505],[700,515],[780,523],[850,518],[920,500],[1000,505],[1100,515],[1130,525],[1190,518],[1230,495],[1270,468],[1300,475],[1335,433],[1380,440],[1400,490],[1450,495]];
  var y8 = [[0,495],[50,480],[90,465],[120,465],[170,475],[220,482],[290,490],[350,505],[400,505],[430,520],[500,505],[570,483],[600,495],[640,525],[670,518],[730,518],[770,525],[850,525],[880,500],[910,487],[945,490],[965,505],[980,507]];
  var yl = conv(y7, 186).concat(conv(y8, 752));
  add(document.getElementById('wadline'), 'path', { d: line(function (x) { return interp(yl, x); }, 190, 1126, 2), stroke: '#e6d23a', fill: 'none', 'stroke-width': 1 });
})();
```
